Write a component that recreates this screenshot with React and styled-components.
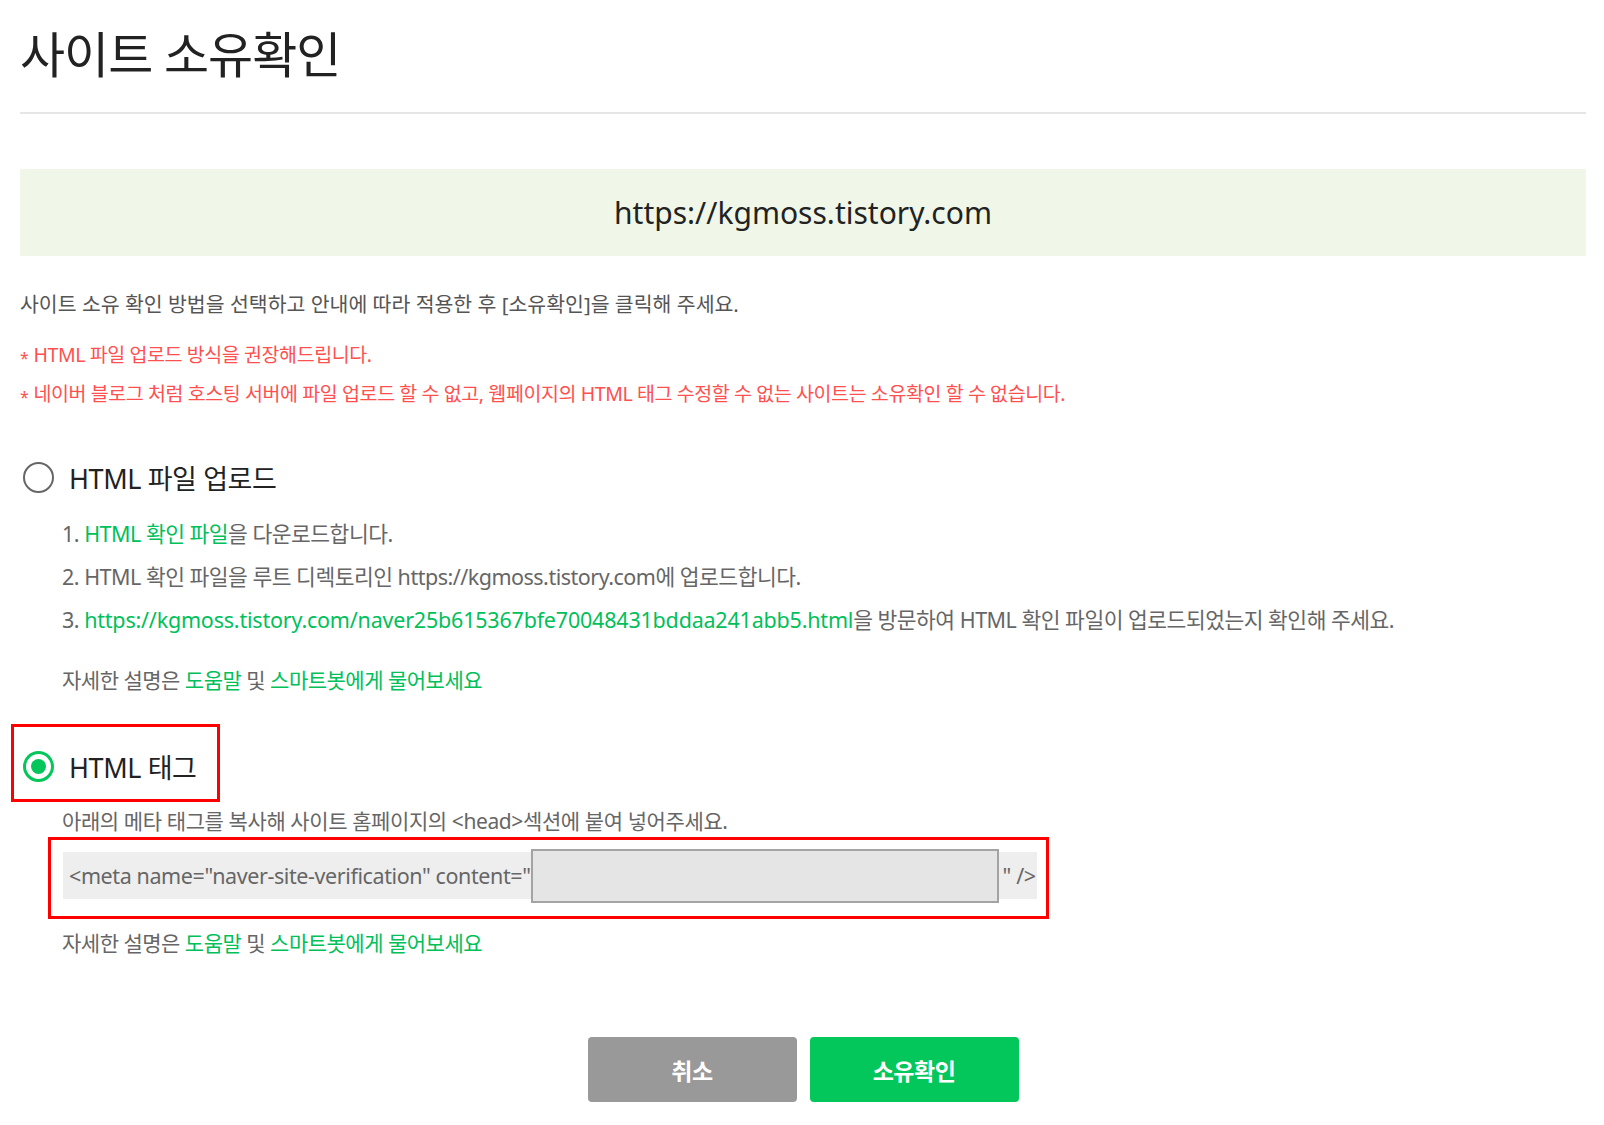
import React from 'react';
import styled, { createGlobalStyle } from 'styled-components';

const GlobalStyle = createGlobalStyle`
    body{
        margin:0;
        background:#ffffff;
        font-family: "Noto Sans", "Noto Sans CJK KR", sans-serif;
        color:#222222;
    }
`;

const Page = styled.div`
    box-sizing:border-box;
    width:100%;
    padding:20px 18px 0 20px;
`;

const Title = styled.h1`
    margin:0;
    font-size:49px;
    font-weight:400;
    line-height:68px;
    letter-spacing:-1px;
    color:#222222;
`;

const Divider = styled.hr`
    margin:24px 0 55px;
    border:0;
    border-top:2px solid #e6e6e6;
`;

const SiteBox = styled.div`
    height:87px;
    display:flex;
    align-items:center;
    justify-content:center;
    background:#f0f7e8;
    font-size:30px;
    color:#222222;
`;

const Desc = styled.p`
    margin:33px 0 0;
    font-size:20.5px;
    line-height:30px;
    color:#555555;
`;

const Notice = styled.ul`
    margin:16px 0 0;
    padding:0;
    list-style:none;

    li{
        height:39px;
        font-size:19.5px;
        line-height:39px;
        color:#ff5050;
        letter-spacing:-0.4px;
    }
    li::before{
        content:"*";
        margin-right:5px;
        font-size:16px;
        line-height:0;
        vertical-align:-2px;
    }
`;

const RadioRow = styled.div`
    display:flex;
    align-items:center;
    gap:15px;
    height:40px;
    margin-top:${p => p.$top}px;
    font-size:27px;
    color:#222222;
    letter-spacing:-0.4px;
`;

const Radio = styled.span`
    box-sizing:border-box;
    width:31px;
    height:31px;
    border-radius:50%;
    margin-left:3px;
    border:${p => p.$checked ? '3px solid #03c75a' : '2.5px solid #666666'};
    display:flex;
    align-items:center;
    justify-content:center;

    &::after{
        content:"";
        display:${p => p.$checked ? 'block' : 'none'};
        width:15px;
        height:15px;
        border-radius:50%;
        background:#03c75a;
    }
`;

const Highlight = styled.div`
    width:fit-content;
    border:3px solid #ff0000;
    margin:22px 0 0 -9px;
    padding:19px 20px 13px 6px;
`;

const Steps = styled.ol`
    margin:15px 0 0;
    padding:0 0 0 42px;
    list-style:none;

    li{
        height:43px;
        font-size:21.5px;
        line-height:43px;
        color:#666666;
        letter-spacing:-0.5px;
    }
`;

const Green = styled.span`
    color:#00c05a;
    letter-spacing:${p => p.$wide ? '-0.2px' : 'inherit'};
`;

const Help = styled.p`
    height:43px;
    margin:${p => p.$top}px 0 0;
    padding-left:42px;
    font-size:21px;
    line-height:43px;
    color:#666666;
    letter-spacing:-0.5px;
`;

const MetaDesc = styled.p`
    height:30px;
    margin:4px 0 0;
    padding-left:42px;
    font-size:21px;
    line-height:30px;
    color:#666666;
    letter-spacing:-0.4px;
`;

const MetaFrame = styled.div`
    width:fit-content;
    margin:1px 0 0 28px;
    padding:12px 9px 17px 12px;
    border:3px solid #ff0000;
`;

const MetaBar = styled.div`
    width:974px;
    height:47px;
    box-sizing:border-box;
    padding-left:6px;
    display:flex;
    align-items:center;
    background:#eeeeee;
    font-size:21.5px;
    color:#666666;
    letter-spacing:-0.4px;
    white-space:nowrap;
`;

const MetaInput = styled.div`
    box-sizing:border-box;
    width:468px;
    height:54px;
    flex:none;
    margin:1px 4px 0 auto;
    background:#e5e5e5;
    border:2px solid #a3a3a3;
`;

const MetaEnd = styled.span`
    margin-right:7px;
`;

const Buttons = styled.div`
    margin-top:72px;
    display:flex;
    justify-content:center;
    gap:13px;
`;

const Button = styled.button`
    width:209px;
    height:65px;
    border:0;
    border-radius:4px;
    background:${p => p.$primary ? '#03c75a' : '#999999'};
    color:#ffffff;
    font-family:inherit;
    font-size:23px;
    font-weight:700;
    letter-spacing:-0.5px;
`;

export default function App() {
    return <Page>
        <GlobalStyle />
        <Title>사이트 소유확인</Title>
        <Divider />
        <SiteBox>https://kgmoss.tistory.com</SiteBox>
        <Desc>사이트 소유 확인 방법을 선택하고 안내에 따라 적용한 후 [소유확인]을 클릭해 주세요.</Desc>
        <Notice>
            <li>HTML 파일 업로드 방식을 권장해드립니다.</li>
            <li>네이버 블로그 처럼 호스팅 서버에 파일 업로드 할 수 없고, 웹페이지의 HTML 태그 수정할 수 없는 사이트는 소유확인 할 수 없습니다.</li>
        </Notice>

        <RadioRow $top={44}>
            <Radio />
            HTML 파일 업로드
        </RadioRow>
        <Steps>
            <li>1. <Green>HTML 확인 파일</Green>을 다운로드합니다.</li>
            <li>2. HTML 확인 파일을 루트 디렉토리인 https://kgmoss.tistory.com에 업로드합니다.</li>
            <li>3. <Green $wide>https://kgmoss.tistory.com/naver25b615367bfe70048431bddaa241abb5.html</Green>을 방문하여 HTML 확인 파일이 업로드되었는지 확인해 주세요.</li>
        </Steps>
        <Help $top={18}>자세한 설명은 <Green>도움말</Green> 및 <Green>스마트봇에게 물어보세요</Green></Help>

        <Highlight>
            <RadioRow $top={0}>
                <Radio $checked />
                HTML 태그
            </RadioRow>
        </Highlight>
        <MetaDesc>아래의 메타 태그를 복사해 사이트 홈페이지의 &lt;head&gt;섹션에 붙여 넣어주세요.</MetaDesc>
        <MetaFrame>
            <MetaBar>
                &lt;meta name="naver-site-verification" content="
                <MetaInput />
                <MetaEnd>" /&gt;</MetaEnd>
            </MetaBar>
        </MetaFrame>
        <Help $top={3}>자세한 설명은 <Green>도움말</Green> 및 <Green>스마트봇에게 물어보세요</Green></Help>

        <Buttons>
            <Button>취소</Button>
            <Button $primary>소유확인</Button>
        </Buttons>
    </Page>
}
